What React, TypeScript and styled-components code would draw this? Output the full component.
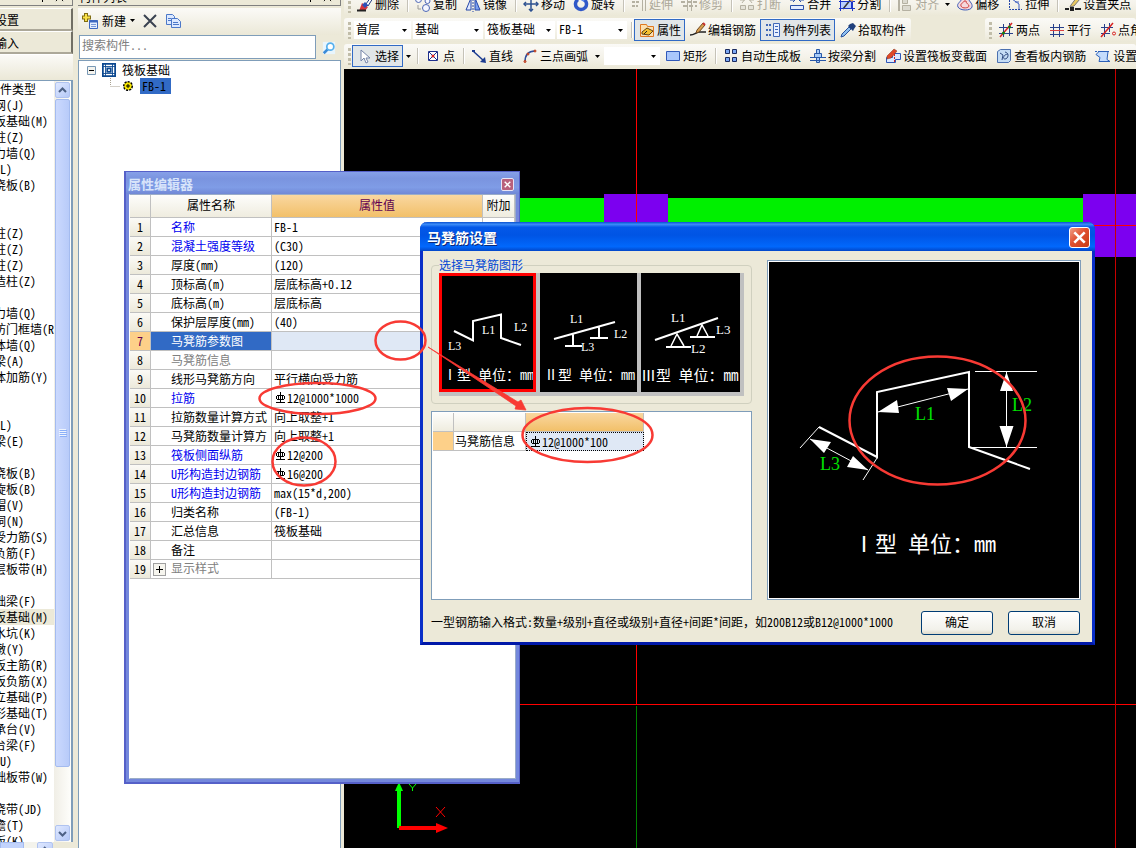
import React from 'react';
import styled, { createGlobalStyle, css } from 'styled-components';

const GlobalStyle = createGlobalStyle`
  *, *::before, *::after { box-sizing: border-box; }
  html, body { margin: 0; padding: 0; }
  body, button, input, select {
    font-family: "Noto Sans CJK SC", "Liberation Sans", sans-serif;
    font-size: 12px;
    line-height: 16px;
    font-feature-settings: "hwid";
    color: #000;
  }
  body { background: #ece9d8; }
  button { padding: 0; margin: 0; }
`;

/* ---------- shell ---------- */

const Shell = styled.div`
  position: relative;
  display: flex;
  height: 100vh;
  overflow: hidden;
  background: #ece9d8;
`;

const NavDock = styled.aside`
  flex: 0 0 78px;
  display: flex;
  flex-direction: column;
  padding-right: 5px;
  overflow: hidden;
`;

const ListDock = styled.aside`
  flex: 0 0 266px;
  display: flex;
  flex-direction: column;
  padding-right: 3px;
  overflow: hidden;
`;

const Workspace = styled.main`
  flex: 1;
  min-width: 0;
  display: flex;
  flex-direction: column;
`;

const DockTitle = styled.header`
  flex: none;
  display: flex;
  align-items: center;
  justify-content: flex-end;
  height: 20px;
  margin-top: -14px;
  margin-bottom: 2px;
  padding: 2px 4px 0 1px;
  border: 1px solid #808080;
  border-left: 0;
  span { flex: 1; line-height: 18px; }
`;

const TitleIcon = styled.button`
  display: flex;
  width: 17px;
  height: 16px;
  border: 0;
  background: none;
  align-items: center;
  justify-content: center;
`;

/* ---------- module tree ---------- */

const ModuleButton = styled.button`
  flex: none;
  height: 23px;
  padding-top: 2px;
  overflow: hidden;
  text-align: left;
  white-space: nowrap;
  background: #ece9d8;
  border: solid;
  border-width: 1px 2px 2px 0;
  border-color: #fff #716f64 #aca899 #fff;
  span { margin-left: -29px; }
`;

const ModuleBar = styled.div`
  flex: none;
  height: 26px;
  background: linear-gradient(#fbfaf7, #ebe8d7);
  border-top: 1px solid #fff;
`;

const TreeFrame = styled.div`
  flex: 1;
  min-height: 0;
  display: flex;
  border-top: 1px solid #7f9db9;
  border-right: 2px solid #7f9db9;
  background: #fff;
`;

const TreeBody = styled.div`
  flex: 1;
  min-width: 0;
  overflow: hidden;
  white-space: nowrap;
  ul { list-style: none; margin: 0; padding: 0; }
`;

const TreeRoot = styled.div`
  margin-left: -36px;
`;

const TreeGroup = styled.ul<{ $gap: number }>`
  && { margin-top: ${(p) => p.$gap}px; }
`;

const TreeItem = styled.li<{ $active?: boolean }>`
  height: 16px;
  padding-left: 18px;
  background: ${(p) => (p.$active ? '#ece9d8' : 'transparent')};
`;

const ScrollTrack = styled.div`
  flex: 0 0 17px;
  display: flex;
  flex-direction: column;
  padding: 1px;
  background: linear-gradient(90deg, #f0eee6, #fefefb);
`;

const ScrollButton = styled.button`
  flex: none;
  display: flex;
  align-items: center;
  justify-content: center;
  height: 16px;
  border: 1px solid #b0c3f0;
  border-radius: 2px;
  background: linear-gradient(135deg, #dfe8ff, #b5c9f8);
`;

const ScrollThumb = styled.div`
  flex: 668;
  display: flex;
  align-items: center;
  justify-content: center;
  margin-top: 1px;
  border: 1px solid #a4bbef;
  border-radius: 2px;
  background: linear-gradient(90deg, #cbd9fe, #b8cbf9);
`;

const ScrollRest = styled.div`
  flex: 58;
`;

const HScroll = styled.div`
  flex: none;
  display: flex;
  justify-content: space-between;
  height: 6px;
  margin-right: 20px;
  background: #f4f3ec;
  overflow: hidden;
  div { width: 24px; height: 16px; border: 1px solid #a4bbef; background: #c2d3fc; }
  button { width: 16px; }
`;

/* ---------- component list ---------- */

const ListBar = styled.div`
  flex: none;
  display: flex;
  align-items: center;
  height: 27px;
  padding: 0 4px 2px;
  background: linear-gradient(#fbfaf7, #ebe8d7);
`;

const FlatButton = styled.button`
  display: flex;
  align-items: center;
  gap: 4px;
  height: 20px;
  border: 0;
  background: none;
  margin-right: 7px;
`;

const SearchRow = styled.form`
  flex: none;
  display: flex;
  height: 25px;
  padding-left: 1px;
  input {
    flex: 1;
    min-width: 0;
    height: 24px;
    padding: 0 2px 6px;
    border: 1px solid #7f9db9;
    background: #fff;
    outline: 0;
  }
  input::placeholder { color: #808080; opacity: 1; }
  button {
    width: 25px;
    display: flex;
    align-items: center;
    justify-content: center;
    border: 0;
    background: none;
  }
`;

const ListTree = styled.div`
  flex: 1;
  padding: 1px 0 0 8px;
  background: #fff;
  border: 1px solid #7f9db9;
  border-width: 1px 1px 0 1px;
`;

const ListNode = styled.div<{ $child?: boolean }>`
  display: flex;
  align-items: center;
  gap: 6px;
  height: 16px;
  padding-left: ${(p) => (p.$child ? 21 : 0)}px;
  svg { flex: none; }
`;

const NodeLabel = styled.span<{ $selected?: boolean }>`
  ${(p) =>
    p.$selected &&
    css`
      padding: 0 5px 0 2px;
      background: #316ac5;
    `}
`;

/* ---------- toolbars ---------- */

const ToolRow = styled.div<{ $first?: boolean }>`
  flex: none;
  display: flex;
  height: 24px;
  margin-top: ${(p) => (p.$first ? -8 : 0)}px;
  margin-bottom: 2px;
  overflow: hidden;
`;

const Strip = styled.div<{ $fill?: boolean; $dense?: boolean }>`
  --tool-end: ${(p) => (p.$dense ? 2 : 3)}px;
  --sep-lead: ${(p) => (p.$dense ? 5 : 4)}px;
  flex: ${(p) => (p.$fill ? '1 0 0' : '0 0 auto')};
  min-width: 0;
  display: flex;
  align-items: center;
  padding-right: 1px;
  border-radius: 3px;
  white-space: nowrap;
  background: linear-gradient(#fbfaf7, #f4f2e9 55%, #ebe8d7);
`;

const StripGap = styled.div`
  flex: 0 0 74px;
`;

const Grip = styled.i`
  flex: none;
  width: 3px;
  height: 17px;
  margin: 0 1px 0 4px;
  background: repeating-linear-gradient(#c1bda9 0 3px, transparent 3px 5px);
`;

const ToolSep = styled.i`
  flex: none;
  width: 2px;
  height: 16px;
  margin: 0 1px 0 var(--sep-lead);
  border-left: 1px solid #c5c2b8;
  border-right: 1px solid #fff;
`;

const ToolButton = styled.button<{ $active?: boolean; $off?: boolean }>`
  flex: none;
  display: flex;
  align-items: center;
  gap: 2px;
  height: 22px;
  padding: 0 var(--tool-end) 0 4px;
  border: 1px solid ${(p) => (p.$active ? '#316ac5' : 'transparent')};
  background: ${(p) => (p.$active ? '#e1e6e8' : 'transparent')};
  color: ${(p) => (p.$off ? '#aca899' : '#000')};
`;

const DropButton = styled.button`
  flex: none;
  width: 10px;
  height: 20px;
  border: 0;
  background: none;
  display: flex;
  align-items: center;
  justify-content: center;
`;

const ComboBox = styled.label<{ $w: number }>`
  flex: none;
  display: grid;
  align-items: center;
  width: ${(p) => p.$w}px;
  height: 18px;
  margin-left: 2px;
  background: #fff;
  select, svg { grid-area: 1 / 1; }
  select {
    appearance: none;
    width: 100%;
    height: 18px;
    padding: 0 12px 2px 2px;
    border: 0;
    background: transparent;
    outline: 0;
  }
  svg { justify-self: end; margin-right: 4px; pointer-events: none; }
`;

/* ---------- canvas ---------- */

const Canvas = styled.div`
  flex: 1;
  min-height: 0;
  margin-top: -1px;
  overflow: hidden;
  background: #000;
  svg { display: block; }
`;

/* ---------- property editor window ---------- */

const EditorWindow = styled.section`
  position: absolute;
  left: 124px;
  top: 171px;
  width: 396px;
  height: 613px;
  display: flex;
  flex-direction: column;
  border: solid #5560c8;
  border-width: 1px 1px 2px 2px;
  background: #7488dc;
  padding: 0 3px 3px;
`;

const EditorTitle = styled.header`
  flex: none;
  display: flex;
  align-items: center;
  justify-content: space-between;
  height: 22px;
  margin: 0 -3px;
  padding: 2px 5px 0 2px;
  background: linear-gradient(#86a0e8, #7a94df 30%, #7f9ce6 70%, #7088d6);
  h2 { margin: 0; font-size: 13px; line-height: 16px; color: #d8e4fa; }
`;

const EditorClose = styled.button`
  display: flex;
  align-items: center;
  justify-content: center;
  width: 13px;
  height: 13px;
  border: 1px solid #e8e4f4;
  border-radius: 2px;
  background: #b8607c;
`;

const EditorBody = styled.div`
  flex: 1;
  border: 1px solid #9aacc8;
  border-left-color: #fff;
  background: #fff;
`;

const PropTable = styled.table`
  width: 385px;
  table-layout: fixed;
  border-collapse: separate;
  border-spacing: 0;
  th, td {
    height: 19px;
    padding: 0;
    overflow: hidden;
    white-space: nowrap;
    font-weight: normal;
    border: solid #c0c0c0;
    border-width: 0 1px 1px 0;
    line-height: 16px;
  }
  thead th { height: 23px; padding-bottom: 2px; background: linear-gradient(#fdfdfb, #efecdf); }
  tbody th { background: linear-gradient(#fbfaf6, #ece9da); }
`;

const ValueHead = styled.th`
  && { background: linear-gradient(#f9d7a0, #f2c069); color: #600050; }
`;

type Tone = 'plain' | 'key' | 'muted';
const toneColor: Record<Tone, string> = { plain: '#000', key: '#0000f0', muted: '#808080' };

const NameCell = styled.td<{ $tone: Tone; $selected?: boolean }>`
  && {
    padding-left: 20px;
    text-overflow: clip;
    color: ${(p) => (p.$selected ? '#fff' : toneColor[p.$tone])};
    background: ${(p) => (p.$selected ? '#316ac5' : '#fff')};
  }
`;

const ValueCell = styled.td<{ $selected?: boolean }>`
  && {
    padding-left: 2px;
    background: ${(p) => (p.$selected ? '#dfe8f5' : '#fff')};
  }
`;

const RowNumber = styled.th<{ $selected?: boolean }>`
  && {
    ${(p) =>
      p.$selected &&
      css`
        background: #fdd089;
        color: #600050;
      `}
  }
`;

const ExpandButton = styled.button`
  display: inline-flex;
  align-items: center;
  justify-content: center;
  vertical-align: middle;
  width: 13px;
  height: 13px;
  margin: 0 5px 2px -18px;
  border: 1px solid #a0a0a0;
  background: #f6f5ee;
`;

const RebarMark = styled.svg`
  display: inline-block;
  width: 12px;
  height: 12px;
  margin-right: 1px;
  vertical-align: -1px;
`;

/* ---------- settings dialog ---------- */

const DialogWindow = styled.section`
  position: absolute;
  left: 420px;
  top: 222px;
  width: 675px;
  border: solid #0a2fc8;
  border-width: 0 3px 3px;
  border-bottom-color: #0018a8;
  border-radius: 7px 7px 0 0;
  background: #ece9d8;
`;

const DialogTitle = styled.header`
  display: flex;
  align-items: center;
  justify-content: space-between;
  height: 29px;
  margin: 0 -3px;
  padding: 1px 5px 0 7px;
  border-radius: 7px 7px 0 0;
  background: linear-gradient(#0a50d0, #3c8cf8 8%, #0458e8 18%, #0054e4 45%, #0168fc 85%, #0246c8);
  h2 {
    margin: 0;
    font-size: 14px;
    line-height: 20px;
    color: #fff;
    text-shadow: 1px 1px #0a2878;
  }
`;

const DialogClose = styled.button`
  display: flex;
  align-items: center;
  justify-content: center;
  width: 21px;
  height: 21px;
  border: 1px solid #fff;
  border-radius: 3px;
  background: linear-gradient(135deg, #f0a088, #e05030 45%, #c83c14);
`;

const DialogBody = styled.div`
  display: grid;
  grid-template-columns: 321px 1fr;
  column-gap: 15px;
  padding: 7px 11px 0 8px;
`;

const ShapeColumn = styled.div`
  display: flex;
  flex-direction: column;
  gap: 7px;
`;

const ShapeGroup = styled.fieldset`
  margin: 0;
  padding: 1px 7px 7px;
  border: 1px solid #d0d0bf;
  border-radius: 4px;
  legend { padding: 0; line-height: 14px; color: #0046d5; }
`;

const ShapeList = styled.div`
  display: flex;
  gap: 4px;
  padding: 0 4px 4px 0;
  background: #c0c0c0;
`;

const ShapeButton = styled.button`
  flex: 0 0 97px;
  height: 119px;
  border: 0;
  background: #000;
  overflow: hidden;
  svg { display: block; }
  &:last-child { flex: 1; }
`;

const InfoPane = styled.div`
  flex: 1;
  min-height: 187px;
  padding: 1px;
  border: 1px solid #7f9db9;
  background: #fff;
`;

const InfoTable = styled.table`
  width: 211px;
  table-layout: fixed;
  border-collapse: separate;
  border-spacing: 0;
  th, td {
    height: 19px;
    padding: 0 1px;
    border: solid #c0c0c0;
    border-width: 0 1px 1px 0;
    white-space: nowrap;
    line-height: 16px;
    font-weight: normal;
  }
  thead th { background: linear-gradient(#fdfdfb, #efecdf); }
  thead th:last-child { background: linear-gradient(#f9d7a0, #f2c069); }
  tbody th { background: #fdd089; }
  tbody td:last-child {
    padding-left: 2px;
    background: #dfe8f5;
    border: 1px dotted #000;
  }
`;

const Preview = styled.div`
  margin-top: 2px;
  padding: 1px;
  border: 1px solid #7f9db9;
  background: #fff;
  svg { display: block; width: 100%; height: 336px; background: #000; }
`;

const DialogFooter = styled.footer`
  display: flex;
  align-items: center;
  gap: 15px;
  padding: 11px 12px 7px 8px;
  p { flex: 1; margin: 0; padding-bottom: 2px; white-space: nowrap; }
`;

const FullWidth = styled.span`
  font-feature-settings: normal;
`;

const PushButton = styled.button`
  flex: 0 0 72px;
  height: 24px;
  padding-bottom: 2px;
  border: 1px solid #003c74;
  border-radius: 3px;
  background: linear-gradient(#fff, #f2f1ea 80%, #dedacb);
`;

const Annotations = styled.svg`
  position: absolute;
  left: 0;
  top: 0;
  pointer-events: none;
`;

/* ---------- icons ---------- */

const B = '#27408b';
const glyphs: Record<string, React.ReactNode> = {
  erase: (
    <>
      <path d="M9 8 14 1l2 1-5 8z" fill="#fff" stroke="#223a80" />
      <path d="M5 7l6 4-3 4H2z" fill="#d8343c" />
      <path d="M8 6l3 3-3 3-3-3z" fill="#2c50b8" />
      <path d="M0 14.500h9" stroke="#222" strokeWidth="2" />
    </>
  ),
  copyshape: (
    <g fill="#f4f6ff" stroke="#4c66b4">
      <circle cx="3.500" cy="3.500" r="3" />
      <circle cx="12.500" cy="5" r="2.500" />
      <circle cx="11" cy="12" r="3.500" />
      <path d="M3 9v4h3" fill="none" stroke="#9a9a9a" />
    </g>
  ),
  mirror: (
    <g fill="#dfe8ff" stroke="#2546a8">
      <path d="M6 2v12H1z" />
      <path d="M10 2v12h5z" fill="#7ca0f0" />
      <path d="M8 0v16" stroke="#2546a8" strokeDasharray="2 1" />
    </g>
  ),
  move: (
    <g fill="none" stroke="#2c5090" strokeWidth="1.500">
      <path d="M8 1v14M1 8h14" />
      <path d="M6 3l2-2 2 2M6 13l2 2 2-2M3 6 1 8l2 2M13 6l2 2-2 2" />
    </g>
  ),
  rotate: (
    <g fill="none">
      <path d="M5 3.500A5.500 5.500 0 1 0 11 3.500" stroke="#3058c8" strokeWidth="3.500" />
      <path d="M12 1 6 3l5 3z" fill="#5a86ec" />
    </g>
  ),
  extend: (
    <g stroke="#b5b1a2" fill="none">
      <path d="M14.500 1v14M11.500 1v14" />
      <path d="M1 6h8M1 10h6" strokeWidth="2" strokeDasharray="3 1" />
    </g>
  ),
  trim: (
    <g stroke="#b5b1a2" fill="none">
      <path d="M6.500 1v14M10.500 1v14" />
      <path d="M0 6h16M2 10h14" strokeWidth="2" strokeDasharray="4 2" />
    </g>
  ),
  breakit: (
    <g stroke="#b5b1a2" fill="#e4e2d8">
      <path d="M1.500 9.500h5v4h-5zM9.500 9.500h5v4h-5z" />
      <path d="M3 7l3-4M13 7l-3-4M1 4h5M10 4h5" />
    </g>
  ),
  merge: (
    <g stroke="#2c50a8" fill="#e4ecff">
      <path d="M1.500 9.500h13v4h-13z" />
      <path d="M1 4h5M10 4h5M4 2l2 2-2 2M12 2l-2 2 2 2" fill="none" />
    </g>
  ),
  split: (
    <g stroke="#1c36c8" fill="#b9d0ff">
      <path d="M1.500 5.500h11v7h-11z" />
      <path d="M4 13l8-10" stroke="#333" strokeWidth="1.500" />
      <path d="M0 5.500h16M0 12.500h16M1.500 3v12M13.500 3v12" />
      <path d="M11 4l3-4 2 2-3 4z" fill="#e8a860" stroke="none" />
    </g>
  ),
  align: (
    <g stroke="#b5b1a2" fill="#dcdad0">
      <path d="M2 1v14" strokeWidth="2" />
      <path d="M5.500 3.500h5v4h-5zM5.500 9.500h8v5h-8z" />
    </g>
  ),
  offset: (
    <g fill="#f4d8dc" stroke="#3c5cb8">
      <path d="M5 1h6c0 4 5 6 4 10s-12 4-14 0S5 6 5 1z" />
      <path d="M7 5h2c0 3 3 3 3 5s-7 3-8 0 3-3 3-5z" stroke="#d04040" />
    </g>
  ),
  stretch: (
    <g fill="none" stroke="#2546a8">
      <path d="M2.500 1v12.500H15" strokeDasharray="2 1" />
      <path d="M5 3l7 5v5M8 6h4" stroke="#4060c0" />
    </g>
  ),
  grippoint: (
    <>
      <path d="M6 9l6-8 3 2-6 7-4 1z" fill="#e8c860" stroke="#777" />
      <path d="M0 13h4M10 13h6" stroke="#222" strokeWidth="2" />
      <path d="M5 11h4v4H5z" fill="#222" />
    </>
  ),
  props: (
    <>
      <path d="M1.500 2.500h6l1 2h6v10h-13z" fill="#fce0b0" stroke="#e07820" />
      <path d="M3 10l5-4 6 3-4 4-7-1z" fill="#f4c030" stroke="#604010" />
      <path d="M5 12l3-3" stroke="#222" />
    </>
  ),
  editbar: (
    <>
      <path d="M0 13c5 0 6-3 10-3h6" fill="none" stroke="#222" strokeWidth="1.500" />
      <path d="M7 8l6-7 2 2-6 7-3 1z" fill="#d8a050" stroke="#704820" />
      <path d="M13 1l2 2" stroke="#c83030" strokeWidth="2" />
    </>
  ),
  list: (
    <g>
      <path d="M8.500 1.500h6v13h-6z" fill="#e8f0ff" stroke="#4068b8" />
      <path d="M10 4.500h3M10 7.500h3M10 10.500h3" stroke="#4068b8" />
      <path d="M1 3h5M1 8h5M1 13h5" stroke="#4068b8" strokeWidth="2" strokeDasharray="2 1" />
    </g>
  ),
  picker: (
    <>
      <path d="M9 5 2 12l-1 3 3-1 7-7z" fill="#8ec0f0" stroke="#28509c" />
      <path d="M8 4l5 5 1-2 2-3-3-3-3 1z" fill="#20407c" />
    </>
  ),
  twopt: (
    <g fill="none" stroke={B}>
      <path d="M5.500 2v13M11.500 1v13M1 5.500h14M1 11.500h14" />
      <path d="M2 15 14 1" stroke="#d82020" strokeWidth="1.500" />
      <circle cx="5.500" cy="11" r="1.500" fill="#108010" stroke="none" />
      <circle cx="11.500" cy="5" r="1.500" fill="#108010" stroke="none" />
    </g>
  ),
  parallel: (
    <g fill="none" stroke={B}>
      <path d="M4.500 2v13M10.500 2v13M1 12.500h14M1 5.500h14" />
      <path d="M1 8.500h14" stroke="#d84040" />
    </g>
  ),
  angle: (
    <g fill="none" stroke={B}>
      <path d="M4.500 2v13M1 5.500h12M1 11.500h9M9.500 1v9" />
      <path d="M1 15 13 1" stroke="#d82020" strokeWidth="1.500" />
      <circle cx="14" cy="11.500" r="1.500" stroke="#d82020" />
    </g>
  ),
  cursor: <path d="M4 2v11l3-3 2 5 2-1-2-4h4z" fill="#fff" stroke="#7484a8" />,
  point: (
    <g fill="#fff" stroke="#20308c">
      <path d="M3.500 3.500h9v9h-9z" />
      <path d="M4 4l8 8M12 4l-8 8" />
      <circle cx="8" cy="8" r="1.500" fill="#d82020" stroke="none" />
    </g>
  ),
  line: (
    <g>
      <path d="M2 3l11 10" stroke="#1c3c90" strokeWidth="1.500" />
      <path d="M15 15l-6-1 5-5z" fill="#1c3c90" />
      <path d="M1 2h3v2H1z" fill="#1c3c90" />
    </g>
  ),
  arc: (
    <g fill="none">
      <path d="M3 14C3 7 6 3 13 3" stroke="#2c4c9c" strokeWidth="1.500" />
      <g fill="#f08060" stroke="#b83818">
        <circle cx="3" cy="13.500" r="1" />
        <circle cx="6" cy="6" r="1" />
        <circle cx="13" cy="3" r="1" />
      </g>
    </g>
  ),
  rect: <path d="M1.500 3.500h13v9h-13z" fill="#a9c6fb" stroke="#3058b8" />,
  grid4: (
    <g fill="#7ca8f4" stroke="#1c2c60">
      <path d="M2.500 1.500h4v4h-4zM9.500 1.500h4v4h-4zM2.500 9.500h4v4h-4zM9.500 9.500h4v4h-4z" />
    </g>
  ),
  beamsplit: (
    <g stroke="#2858a8" fill="#a8ccf8">
      <path d="M4.500 5.500h7v4h-7zM6.500 1.500h3v4h-3zM6.500 9.500h3v5h-3z" />
      <path d="M0 9.500h16M0 12.500h16" />
    </g>
  ),
  section: (
    <g>
      <path d="M1.500 9.500h6v-4h8v6h-5v3h-9z" fill="#dce8ff" stroke="#3058b8" />
      <path d="M2 8l7-7 3 2-6 7-4 1z" fill="#e04828" stroke="#803018" strokeWidth=".5" />
      <path d="M9.500 6v9" stroke="#d82020" strokeDasharray="2 1" />
    </g>
  ),
  viewbar: (
    <g>
      <path d="M1.500 3.500l3-2h10v11l-2 2h-11z" fill="#c4dcf4" stroke="#4c70b0" />
      <path d="M4 5l3 2-1 5M9 4c5 1 3 7 0 7s-1-5 3-5" fill="none" stroke="#304c80" />
    </g>
  ),
  setmore: (
    <g fill="#c4dcfc" stroke="#2c60b8">
      <path d="M4 3.500h9l-1 8 3 2H4l1-4-4-3z" />
      <path d="M0 3.500h15" strokeDasharray="2 1" />
    </g>
  ),
  create: (
    <g>
      <path d="M4 0v9M0 4.500h9" stroke="#806c10" strokeWidth="4" />
      <path d="M4 1v7M1 4.500h7" stroke="#f8e048" strokeWidth="2" />
      <path d="M7.500 7.500h8v8h-8z" fill="#e4efff" stroke="#3c68c0" />
      <path d="M7 8.500h9" stroke="#3c68c0" strokeWidth="2" />
      <path d="M9 11.500h5M9 13.500h5" stroke="#7898d8" />
    </g>
  ),
  remove: <path d="M2 2l12 12M14 2 2 14" stroke="#3a4250" strokeWidth="2" fill="none" />,
  copy: (
    <g fill="#dce9ff" stroke="#4c78c8">
      <path d="M1.500 1.500h6l2 2v8h-8z" />
      <path d="M6.500 5.500h6l3 3v6h-9z" />
      <path d="M8 9.500h5M8 11.500h6M3 5.500h3M3 7.500h3" />
    </g>
  ),
  search: (
    <g>
      <path d="M1 1h14v14H1z" fill="#e8f5fd" />
      <path d="M2 14l5-5" stroke="#3c8cd8" strokeWidth="3" />
      <circle cx="9.500" cy="6.500" r="4" fill="#fff" stroke="#58b0ec" strokeWidth="2" />
    </g>
  ),
  raft: (
    <g fill="none" stroke="#0c4890">
      <path d="M1 1h14v14H1z" fill="#fff" strokeWidth="2" />
      <path d="M4 1v14M12 1v14M1 4h14M1 12h14" />
      <path d="M6 6h4v4H6z" strokeWidth="2" />
    </g>
  ),
};

const Icon = ({ name, size = 16 }: { name: string; size?: number }) => (
  <svg width={size} height={size} viewBox="0 0 16 16" aria-hidden="true">
    {glyphs[name]}
  </svg>
);

const Caret = () => (
  <svg width="5" height="3" viewBox="0 0 5 3" aria-hidden="true">
    <path d="M0 0h5L2.500 3z" fill="#000" />
  </svg>
);

const Chevron = ({ turn = 0 }: { turn?: number }) => (
  <svg width="9" height="9" viewBox="0 0 9 9" aria-hidden="true">
    <path d="M1 6l3.500-3.500L8 6" transform={`rotate(${turn} 4.500 4.500)`} fill="none" stroke="#4d6185" strokeWidth="2" />
  </svg>
);

const Cross = ({ size, weight, color }: { size: number; weight: number; color: string }) => (
  <svg width={size} height={size} viewBox="0 0 10 10" aria-hidden="true">
    <path d="M1 1l8 8M9 1 1 9" stroke={color} strokeWidth={weight} />
  </svg>
);

const Pin = () => (
  <svg width="9" height="10" viewBox="0 0 9 10" aria-hidden="true">
    <path d="M1 6.500h7M4.500 6v4M2.500 6V1h4v5M5.500 1v5" fill="none" stroke="#000" />
  </svg>
);

/* ---------- toolbar parts ---------- */

type ToolProps = { icon: string; label: string; active?: boolean; off?: boolean };

const Tool = ({ icon, label, active, off }: ToolProps) => (
  <ToolButton type="button" $active={active} $off={off} disabled={off}>
    <Icon name={icon} />
    {label}
  </ToolButton>
);

const Combo = ({ value, width, label }: { value: string; width: number; label: string }) => (
  <ComboBox $w={width}>
    <select aria-label={label} defaultValue={value}>
      <option>{value}</option>
    </select>
    <Caret />
  </ComboBox>
);

const Drop = ({ label }: { label: string }) => (
  <DropButton type="button" aria-label={label}>
    <Caret />
  </DropButton>
);

const EditBar = () => (
  <ToolRow $first>
    <Strip $fill $dense>
      <Grip />
      <Tool icon="erase" label="删除" />
      <ToolSep />
      <Tool icon="copyshape" label="复制" />
      <Tool icon="mirror" label="镜像" />
      <ToolSep />
      <Tool icon="move" label="移动" />
      <Tool icon="rotate" label="旋转" />
      <ToolSep />
      <Tool icon="extend" label="延伸" off />
      <Tool icon="trim" label="修剪" off />
      <ToolSep />
      <Tool icon="breakit" label="打断" off />
      <Tool icon="merge" label="合并" />
      <Tool icon="split" label="分割" />
      <ToolSep />
      <Tool icon="align" label="对齐" off />
      <Drop label="对齐选项" />
      <Tool icon="offset" label="偏移" />
      <Tool icon="stretch" label="拉伸" />
      <ToolSep />
      <Tool icon="grippoint" label="设置夹点" />
    </Strip>
  </ToolRow>
);

const ComponentBar = () => (
  <ToolRow>
    <Strip>
      <Grip />
      <Combo label="楼层" value="首层" width={57} />
      <Combo label="构件分类" value="基础" width={70} />
      <Combo label="构件类型" value="筏板基础" width={70} />
      <Combo label="构件" value="FB-1" width={70} />
      <ToolSep />
      <Tool icon="props" label="属性" active />
      <Tool icon="editbar" label="编辑钢筋" />
      <Tool icon="list" label="构件列表" active />
      <Tool icon="picker" label="拾取构件" />
    </Strip>
    <StripGap />
    <Strip $fill>
      <Grip />
      <Tool icon="twopt" label="两点" />
      <Tool icon="parallel" label="平行" />
      <Tool icon="angle" label="点角" />
    </Strip>
  </ToolRow>
);

const DrawBar = () => (
  <ToolRow>
    <Strip $fill>
      <Grip />
      <Tool icon="cursor" label="选择" active />
      <Drop label="选择方式" />
      <ToolSep />
      <Tool icon="point" label="点" />
      <ToolSep />
      <Tool icon="line" label="直线" />
      <Tool icon="arc" label="三点画弧" />
      <Drop label="画弧方式" />
      <Combo label="半径" value="" width={56} />
      <Tool icon="rect" label="矩形" />
      <ToolSep />
      <Tool icon="grid4" label="自动生成板" />
      <Tool icon="beamsplit" label="按梁分割" />
      <Tool icon="section" label="设置筏板变截面" />
      <Tool icon="viewbar" label="查看板内钢筋" />
      <Tool icon="setmore" label="设置" />
    </Strip>
  </ToolRow>
);

/* ---------- module tree data ---------- */

const groups: { gap: number; items: string[] }[] = [
  { gap: 0, items: ['轴网(J)', '筏板基础(M)', '框柱(Z)', '剪力墙(Q)', '梁(L)', '现浇板(B)'] },
  { gap: 32, items: ['框柱(Z)', '暗柱(Z)', '端柱(Z)', '构造柱(Z)'] },
  { gap: 16, items: ['剪力墙(Q)', '人防门框墙(RF)', '砌体墙(Q)', '暗梁(A)', '砌体加筋(Y)'] },
  { gap: 32, items: ['梁(L)', '圈梁(E)'] },
  { gap: 16, items: ['现浇板(B)', '螺旋板(B)', '柱帽(V)', '板洞(N)', '板受力筋(S)', '板负筋(F)', '楼层板带(H)'] },
  {
    gap: 16,
    items: [
      '基础梁(F)', '筏板基础(M)', '集水坑(K)', '柱墩(Y)', '筏板主筋(R)', '筏板负筋(X)',
      '独立基础(P)', '条形基础(T)', '桩承台(V)', '承台梁(F)', '桩(U)', '基础板带(W)',
    ],
  },
  { gap: 16, items: ['后浇带(JD)', '挑檐(T)', '栏板(K)'] },
];

const ModuleTree = () => (
  <NavDock>
    <DockTitle>
      <TitleIcon aria-label="固定"><Pin /></TitleIcon>
      <TitleIcon aria-label="关闭"><Cross size={9} weight={1} color="#000" /></TitleIcon>
    </DockTitle>
    <ModuleButton type="button"><span>工程设置</span></ModuleButton>
    <ModuleButton type="button"><span>绘图输入</span></ModuleButton>
    <ModuleBar />
    <TreeFrame>
      <TreeBody>
        <TreeRoot>
          <div>常用构件类型</div>
          {groups.map((g, i) => (
            <TreeGroup key={i} $gap={g.gap}>
              {g.items.map((t) => (
                <TreeItem key={t} $active={i === 5 && t === '筏板基础(M)'}>{t}</TreeItem>
              ))}
            </TreeGroup>
          ))}
        </TreeRoot>
      </TreeBody>
      <ScrollTrack>
        <ScrollButton aria-label="向上滚动"><Chevron /></ScrollButton>
        <ScrollThumb>
          <svg width="8" height="8" viewBox="0 0 8 8" aria-hidden="true">
            <path d="M0 .5h7M0 2.500h7M0 4.500h7M0 6.500h7" stroke="#eef4fe" />
            <path d="M1 1.500h7M1 3.500h7M1 5.500h7M1 7.500h7" stroke="#8cb0f8" />
          </svg>
        </ScrollThumb>
        <ScrollRest />
        <ScrollButton aria-label="向下滚动"><Chevron turn={180} /></ScrollButton>
      </ScrollTrack>
    </TreeFrame>
    <HScroll>
      <div />
      <ScrollButton aria-label="向右滚动"><Chevron turn={90} /></ScrollButton>
    </HScroll>
  </NavDock>
);

const ComponentList = () => (
  <ListDock>
    <DockTitle>
      <span>构件列表</span>
      <TitleIcon aria-label="固定"><Pin /></TitleIcon>
      <TitleIcon aria-label="关闭"><Cross size={9} weight={1} color="#000" /></TitleIcon>
    </DockTitle>
    <ListBar>
      <FlatButton type="button"><Icon name="create" />新建<Caret /></FlatButton>
      <FlatButton type="button" aria-label="删除"><Icon name="remove" /></FlatButton>
      <FlatButton type="button" aria-label="复制"><Icon name="copy" /></FlatButton>
    </ListBar>
    <SearchRow onSubmit={(e) => e.preventDefault()}>
      <input aria-label="搜索构件" placeholder="搜索构件..." />
      <button type="submit" aria-label="搜索"><Icon name="search" size={14} /></button>
    </SearchRow>
    <ListTree>
      <ListNode>
        <svg width="9" height="9" viewBox="0 0 9 9" aria-hidden="true">
          <path d="M.5.5h8v8h-8z" fill="#f4f3ee" stroke="#7898b5" />
          <path d="M2 4.500h5" stroke="#000" />
        </svg>
        <Icon name="raft" size={14} />
        <NodeLabel>筏板基础</NodeLabel>
      </ListNode>
      <ListNode $child>
        <svg width="26" height="16" viewBox="0 0 26 16" aria-hidden="true">
          <path d="M2.500 0v8M2.500 8.500h10" fill="none" stroke="#a8a090" strokeDasharray="1 1" />
          <circle cx="20" cy="8" r="4" fill="#f8e800" stroke="#000" strokeWidth="2" strokeDasharray="2 1" />
          <circle cx="20" cy="8" r="3.500" fill="#f8e800" />
          <path d="M18 8h4M20 6v4" stroke="#000" />
        </svg>
        <NodeLabel $selected>FB-1</NodeLabel>
      </ListNode>
    </ListTree>
  </ListDock>
);

/* ---------- canvas drawing ---------- */

const Drawing = () => (
  <Canvas>
    <svg width="1600" height="1200" viewBox="344 69 1600 1200" aria-hidden="true">
      <path d="M500 198h583v24H500z" fill="#00f000" />
      <path d="M604 194h64v63h-64zM1083 194h64v63h-64z" fill="#7c00f0" />
      <path d="M636 69h1v636h-1zM344 704h1600v1H344zM1094 225h850v1h-850z" fill="#f00" />
      <path d="M1115 69h1v1200h-1z" fill="#c80000" />
      <path d="M636 706h1v600h-1z" fill="#008000" />
      <path d="M399 828v-40" stroke="#0f0" strokeWidth="4" />
      <path d="M399 782l4 9h-8z" fill="#0f0" />
      <path d="M409 784l3.500 4 3.500-4M412.500 788v3" stroke="#0f0" fill="none" />
      <path d="M399 828h38" stroke="#f00" strokeWidth="4" />
      <path d="M448 828l-12-5v10z" fill="#f00" />
      <path d="M436 807l9 10M445 807l-9 10" stroke="#f00" />
    </svg>
  </Canvas>
);

/* ---------- property editor ---------- */

const Rebar = ({ children }: { children: string }) => (
  <>
    <RebarMark viewBox="0 0 12 12" role="img" aria-label="二级钢筋">
      <path d="M6.500 0v11M3 3.500h7M3 7.500h7M2.500 4v3M10.500 4v3M4.500 4v3M8.500 4v3M2 10.500h9" fill="none" stroke="#000" />
    </RebarMark>
    {children}
  </>
);

type Prop = { name: string; value?: React.ReactNode; tone?: Tone; expand?: boolean };

const properties: Prop[] = [
  { name: '名称', value: 'FB-1', tone: 'key' },
  { name: '混凝土强度等级', value: '(C30)', tone: 'key' },
  { name: '厚度(mm)', value: '(120)' },
  { name: '顶标高(m)', value: '层底标高+0.12' },
  { name: '底标高(m)', value: '层底标高' },
  { name: '保护层厚度(mm)', value: '(40)' },
  { name: '马凳筋参数图' },
  { name: '马凳筋信息', tone: 'muted' },
  { name: '线形马凳筋方向', value: '平行横向受力筋' },
  { name: '拉筋', value: <Rebar>12@1000*1000</Rebar>, tone: 'key' },
  { name: '拉筋数量计算方式', value: '向上取整+1' },
  { name: '马凳筋数量计算方', value: '向上取整+1' },
  { name: '筏板侧面纵筋', value: <Rebar>12@200</Rebar>, tone: 'key' },
  { name: 'U形构造封边钢筋', value: <Rebar>16@200</Rebar>, tone: 'key' },
  { name: 'U形构造封边钢筋', value: 'max(15*d,200)', tone: 'key' },
  { name: '归类名称', value: '(FB-1)' },
  { name: '汇总信息', value: '筏板基础' },
  { name: '备注' },
  { name: '显示样式', tone: 'muted', expand: true },
];

const PropertyEditor = () => (
  <EditorWindow>
    <EditorTitle>
      <h2>属性编辑器</h2>
      <EditorClose aria-label="关闭"><Cross size={7} weight={2} color="#fff" /></EditorClose>
    </EditorTitle>
    <EditorBody>
      <PropTable>
        <colgroup>
          <col style={{ width: 21 }} />
          <col style={{ width: 121 }} />
          <col />
          <col style={{ width: 32 }} />
        </colgroup>
        <thead>
          <tr>
            <th />
            <th>属性名称</th>
            <ValueHead>属性值</ValueHead>
            <th>附加</th>
          </tr>
        </thead>
        <tbody>
          {properties.map((p, i) => {
            const selected = i === 6;
            return (
              <tr key={i}>
                <RowNumber $selected={selected}>{i + 1}</RowNumber>
                <NameCell $tone={p.tone ?? 'plain'} $selected={selected}>
                  {p.expand && (
                    <ExpandButton aria-label="展开">
                      <svg width="9" height="9" viewBox="0 0 9 9" aria-hidden="true">
                        <path d="M1 4.500h7M4.500 1v7" stroke="#000" />
                      </svg>
                    </ExpandButton>
                  )}
                  {p.name}
                </NameCell>
                <ValueCell $selected={selected}>{p.value}</ValueCell>
                <td />
              </tr>
            );
          })}
        </tbody>
      </PropTable>
    </EditorBody>
  </EditorWindow>
);

/* ---------- settings dialog ---------- */

const label = { fill: '#fff', fontFamily: '"Liberation Serif", serif', fontSize: 12 };
const caption = { fill: '#fff', fontSize: 14 };
const dim = { fill: '#00e000', fontFamily: '"Liberation Serif", serif', fontSize: 18 };

const ShapeOne = () => (
  <svg width="97" height="119" viewBox="439 273 97 119">
    <path d="M454 331l19 9.500V321l28-6.500V338l20 7" fill="none" stroke="#fff" strokeWidth="2" />
    <text x="482" y="334" {...label}>L1</text>
    <text x="514" y="331" {...label}>L2</text>
    <text x="448" y="350" {...label}>L3</text>
    <text x="443" y="380" {...caption}>Ⅰ型 单位：mm</text>
    <path d="M440.500 274.500h94v116h-94z" fill="none" stroke="#f00" strokeWidth="3" />
  </svg>
);

const ShapeTwo = () => (
  <svg width="97" height="119" viewBox="540 273 97 119">
    <path d="M554 339l61-17M573 334v12M565 346h17M599 327v11M590 338h18" fill="none" stroke="#fff" strokeWidth="2" />
    <text x="570" y="323" {...label}>L1</text>
    <text x="614" y="338" {...label}>L2</text>
    <text x="581" y="351" {...label}>L3</text>
    <text x="544" y="380" {...caption}>Ⅱ型 单位：mm</text>
  </svg>
);

const ShapeThree = () => (
  <svg width="99" height="119" viewBox="641 273 99 119">
    <path d="M655 340l63-22M666 347h25M690 337h25" fill="none" stroke="#fff" strokeWidth="2" />
    <path d="M671 346l6-12 7 12M697 336l5-11 6 11" fill="none" stroke="#fff" strokeWidth="1.500" />
    <text x="671" y="322" {...label} fontSize={13}>L1</text>
    <text x="716" y="334" {...label} fontSize={13}>L3</text>
    <text x="691" y="353" {...label} fontSize={13}>L2</text>
    <text x="641" y="381" {...caption} fontSize={15}>Ⅲ型 单位：mm</text>
  </svg>
);

const ShapePreview = () => (
  <svg viewBox="769 262 310 336" preserveAspectRatio="xMinYMin">
    <path d="M819 427l58 30v-65l92-20v75l61 22" fill="none" stroke="#fff" strokeWidth="2" />
    <path
      d="M878 412l90-23M975 371.500h62M970 447.500h67M1006.500 372v75M819 427l-19 21M877 458l-14 22M810 439l58 31"
      fill="none"
      stroke="#fff"
    />
    <path
      d="M878 412l19-12 2 13zM968 389l-21-1 4 13zM1006.500 372l-6.500 19h13zM1006.500 447l-7-21h14zM810 439l21 3-7 11zM868 470l-15-14-6 11z"
      fill="#fff"
    />
    <text x="915" y="420" {...dim}>L1</text>
    <text x="1012" y="411" {...dim}>L2</text>
    <text x="820" y="470" {...dim}>L3</text>
    <text x="853" y="552" {...caption} fontSize={22}>Ⅰ型 单位：mm</text>
  </svg>
);

const StoolBarDialog = () => (
  <DialogWindow role="dialog" aria-label="马凳筋设置">
    <DialogTitle>
      <h2>马凳筋设置</h2>
      <DialogClose aria-label="关闭"><Cross size={13} weight={2} color="#fff" /></DialogClose>
    </DialogTitle>
    <DialogBody>
      <ShapeColumn>
        <ShapeGroup>
          <legend>选择马凳筋图形</legend>
          <ShapeList>
            <ShapeButton type="button" aria-pressed="true"><ShapeOne /></ShapeButton>
            <ShapeButton type="button" aria-pressed="false"><ShapeTwo /></ShapeButton>
            <ShapeButton type="button" aria-pressed="false"><ShapeThree /></ShapeButton>
          </ShapeList>
        </ShapeGroup>
        <InfoPane>
          <InfoTable>
            <colgroup>
              <col style={{ width: 21 }} />
              <col style={{ width: 72 }} />
              <col />
            </colgroup>
            <thead>
              <tr><th /><th /><th /></tr>
            </thead>
            <tbody>
              <tr>
                <th />
                <td>马凳筋信息</td>
                <td><Rebar>12@1000*100</Rebar></td>
              </tr>
            </tbody>
          </InfoTable>
        </InfoPane>
      </ShapeColumn>
      <Preview><ShapePreview /></Preview>
    </DialogBody>
    <DialogFooter>
      <p>
        一型钢筋输入格式:数量+级别+直径或级别+直径+间距*间距<FullWidth>，</FullWidth>如200B12或B12@1000*1000
      </p>
      <PushButton type="button">确定</PushButton>
      <PushButton type="button">取消</PushButton>
    </DialogFooter>
  </DialogWindow>
);

const Markup = () => (
  <Annotations width="1136" height="848" viewBox="0 0 1136 848" aria-hidden="true">
    <g fill="none" stroke="#f83a34" strokeWidth="2.500">
      <ellipse cx="400.500" cy="340.500" rx="25" ry="19" />
      <ellipse cx="317.500" cy="398.500" rx="58" ry="15.500" />
      <ellipse cx="304" cy="461.500" rx="31.500" ry="24" />
      <ellipse cx="587.500" cy="435" rx="65" ry="27" />
      <ellipse cx="937.500" cy="420.500" rx="88" ry="64" />
    </g>
    <path
      d="M428 347L518 402L521 400L526 410L515 409L516 406Z"
      fill="#f83a34"
      stroke="#f83a34"
      strokeWidth=".75"
      strokeLinejoin="round"
    />
  </Annotations>
);

export default function App() {
  return (
    <>
      <GlobalStyle />
      <Shell>
        <ModuleTree />
        <ComponentList />
        <Workspace>
          <EditBar />
          <ComponentBar />
          <DrawBar />
          <Drawing />
        </Workspace>
        <PropertyEditor />
        <StoolBarDialog />
        <Markup />
      </Shell>
    </>
  );
}
